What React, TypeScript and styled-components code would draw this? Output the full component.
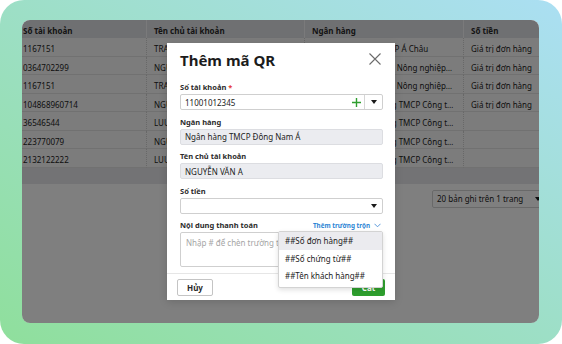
import React from "react";
import styled, {createGlobalStyle} from "styled-components";

const GlobalStyle = createGlobalStyle`
  html, body {
    margin: 0;
    padding: 0;
    background: #ffffff;
  }
  body {
    font-family: "Noto Sans", "Open Sans", sans-serif;
    color: #222;
  }
`;

const rows = [
    {account: "1167151", owner: "TRAN VAN AN", bank: "ACB - Ngân hàng TMCP Á Châu", amount: "Giá trị đơn hàng"},
    {account: "0364702299", owner: "NGUYỄN THỊ HOA", bank: "Agribank - Ngân hàng Nông nghiệp và Phát triển", amount: "Giá trị đơn hàng"},
    {account: "1167151", owner: "TRAN VAN AN", bank: "Agribank - Ngân hàng Nông nghiệp và Phát triển", amount: "Giá trị đơn hàng"},
    {account: "104868960714", owner: "NGUYỄN VĂN BÌNH", bank: "VietinBank-Ngân hàng TMCP Công thương", amount: "Giá trị đơn hàng"},
    {account: "36546544", owner: "LUU VĂN MINH", bank: "VietinBank-Ngân hàng TMCP Công thương", amount: ""},
    {account: "223770079", owner: "NGUYỄN THỊ LAN", bank: "VietinBank-Ngân hàng TMCP Công thương", amount: ""},
    {account: "2132122222", owner: "LUU THỊ HẠNH", bank: "VietinBank-Ngân hàng TMCP Công thương", amount: ""},
];

const mergeFields = ["##Số đơn hàng##", "##Số chứng từ##", "##Tên khách hàng##"];

const Caret = () => (
    <svg width="6" height="4" viewBox="0 0 6 4">
        <path d="M0 0 L6 0 L3 4 Z" fill="#1a1a1a"/>
    </svg>
);

export default function App() {
    return (
        <>
            <GlobalStyle/>
            <Frame>
                <AppWindow>
                    <Table>
                        <HeadCell $first>Số tài khoản</HeadCell>
                        <HeadCell>Tên chủ tài khoản</HeadCell>
                        <HeadCell>Ngân hàng</HeadCell>
                        <HeadCell>Số tiền</HeadCell>
                        {rows.map((r, i) => (
                            <React.Fragment key={i}>
                                <Cell $first>{r.account}</Cell>
                                <Cell>{r.owner}</Cell>
                                <Cell $trim>{r.bank}</Cell>
                                <Cell>{r.amount}</Cell>
                            </React.Fragment>
                        ))}
                    </Table>
                    <ScrollBand/>
                    <Pager>
                        <PageSize>
                            <span>20 bản ghi trên 1 trang</span>
                            <Caret/>
                        </PageSize>
                    </Pager>

                    <Mask/>

                    <Modal>
                        <ModalHeader>
                            <Title>Thêm mã QR</Title>
                            <CloseButton>
                                <svg width="12" height="12" viewBox="0 0 12 12">
                                    <path d="M0.5 0.5 L11.5 11.5 M11.5 0.5 L0.5 11.5" stroke="#6b6b6b" strokeWidth="1.1"/>
                                </svg>
                            </CloseButton>
                        </ModalHeader>

                        <ModalBody>
                            <Field>
                                <Label>Số tài khoản <Required>*</Required></Label>
                                <InputBox>
                                    <InputText>11001012345</InputText>
                                    <PlusIcon>
                                        <svg width="9" height="9" viewBox="0 0 9 9">
                                            <path d="M4.5 0 V9 M0 4.5 H9" stroke="#2f9e2f" strokeWidth="1.4"/>
                                        </svg>
                                    </PlusIcon>
                                    <Addon><Caret/></Addon>
                                </InputBox>
                            </Field>
                            <Field>
                                <Label>Ngân hàng</Label>
                                <InputBox $disabled>
                                    <InputText>Ngân hàng TMCP Đông Nam Á</InputText>
                                </InputBox>
                            </Field>
                            <Field>
                                <Label>Tên chủ tài khoản</Label>
                                <InputBox $disabled>
                                    <InputText>NGUYỄN VĂN A</InputText>
                                </InputBox>
                            </Field>
                            <Field>
                                <Label>Số tiền</Label>
                                <InputBox>
                                    <InputText/>
                                    <SelectCaret><Caret/></SelectCaret>
                                </InputBox>
                            </Field>
                            <Field>
                                <LabelRow>
                                    <Label>Nội dung thanh toán</Label>
                                    <MergeLink>
                                        Thêm trường trộn
                                        <svg width="7" height="5" viewBox="0 0 7 5">
                                            <path d="M0.5 0.8 L3.5 3.8 L6.5 0.8" fill="none" stroke="#4a8fd6" strokeWidth="0.9"/>
                                        </svg>
                                    </MergeLink>
                                </LabelRow>
                                <TextArea>Nhập # để chèn trường thông tin</TextArea>
                            </Field>
                        </ModalBody>

                        <ModalFooter>
                            <CancelButton>Hủy</CancelButton>
                            <SaveButton>Cất</SaveButton>
                        </ModalFooter>

                        <MergeMenu>
                            {mergeFields.map((f, i) => (
                                <MenuItem key={f} $active={i === 0}>{f}</MenuItem>
                            ))}
                        </MergeMenu>
                    </Modal>
                </AppWindow>
            </Frame>
        </>
    );
}

const Frame = styled.div`
  width: 562px;
  height: 344px;
  box-sizing: border-box;
  padding: 20px 23px 21px 22px;
  border-radius: 24px;
  background: linear-gradient(to top right, #8fdf9c 0%, #9ddfc6 50%, #abdff3 100%);
`;

const AppWindow = styled.div`
  position: relative;
  height: 100%;
  border-radius: 8px;
  overflow: hidden;
  background: #ffffff;
  font-size: 8px;
`;

const Table = styled.div`
  display: grid;
  grid-template-columns: 124px 158px 159px 140px;
  grid-template-rows: 18px;
  grid-auto-rows: 18.5px;
`;

const HeadCell = styled.div<{ $first?: boolean }>`
  display: flex;
  align-items: center;
  box-sizing: border-box;
  padding: 3px 0 0 ${p => p.$first ? "1px" : "7px"};
  background: #dfe0e5;
  font-weight: 700;
  color: #2a2a2a;
  border-left: ${p => p.$first ? "none" : "1px solid #f4f4f6"};
  white-space: nowrap;
  overflow: hidden;
`;

const Cell = styled.div<{ $first?: boolean; $trim?: boolean }>`
  display: block;
  box-sizing: border-box;
  padding: 0 ${p => p.$trim ? "9px" : "6px"} 0 ${p => p.$first ? "1px" : "7px"};
  line-height: 21px;
  background: #f9f9f9;
  border-bottom: 1px solid #e2e2e2;
  border-left: ${p => p.$first ? "none" : "1px dotted #d0d0d0"};
  color: #222;
  white-space: nowrap;
  overflow: hidden;
  text-overflow: ellipsis;
`;

const ScrollBand = styled.div`
  height: 16px;
  background: #e6e6ea;
`;

const Pager = styled.div`
  display: flex;
  padding: 6px 0 0 410px;
`;

const PageSize = styled.div`
  display: flex;
  align-items: center;
  justify-content: space-between;
  flex-shrink: 0;
  box-sizing: border-box;
  width: 114px;
  height: 18px;
  padding: 0 4px 0 4px;
  border: 1px solid #d2d2d2;
  border-radius: 2px;
  background: #fff;
  font-size: 8px;
  color: #222;
`;

const Mask = styled.div`
  position: absolute;
  inset: 0;
  background: rgba(0, 0, 0, 0.5);
`;

const Modal = styled.div`
  position: absolute;
  left: 145px;
  top: 23px;
  width: 228px;
  height: 257px;
  display: flex;
  flex-direction: column;
  background: #ffffff;
  box-shadow: 0 2px 8px rgba(0, 0, 0, 0.15);
`;

const ModalHeader = styled.div`
  display: flex;
  align-items: center;
  justify-content: space-between;
  padding: 6px 13px 0 13px;
  height: 22px;
`;

const Title = styled.div`
  font-size: 15px;
  line-height: 22px;
  font-weight: 700;
  color: #1c1c1c;
`;

const CloseButton = styled.div`
  display: flex;
  align-items: center;
  margin-right: 1px;
  margin-top: -2px;
`;

const ModalBody = styled.div`
  display: flex;
  flex-direction: column;
  gap: 6.5px;
  padding: 11px 12px 6px 13px;
  flex: 1;
`;

const Field = styled.div`
  display: flex;
  flex-direction: column;
  gap: 2px;
`;

const Label = styled.div`
  font-size: 7.5px;
  line-height: 10px;
  font-weight: 700;
  color: #2b2b2b;
`;

const Required = styled.span`
  color: #e53935;
`;

const LabelRow = styled.div`
  display: flex;
  justify-content: space-between;
  align-items: center;
`;

const MergeLink = styled.div`
  display: flex;
  align-items: center;
  gap: 4px;
  font-size: 6.3px;
  font-weight: 700;
  color: #2b84d4;
  margin-right: 2px;
`;

const InputBox = styled.div<{ $disabled?: boolean }>`
  display: flex;
  align-items: center;
  box-sizing: border-box;
  height: 16px;
  border: 1px solid ${p => p.$disabled ? "#dcdde1" : "#cfcfcf"};
  border-radius: 2px;
  background: ${p => p.$disabled ? "#ebecf0" : "#ffffff"};
`;

const InputText = styled.div`
  flex: 1;
  padding-left: 4px;
  font-size: 8px;
  color: #222;
  white-space: nowrap;
`;

const PlusIcon = styled.div`
  display: flex;
  align-items: center;
  padding-right: 3px;
`;

const Addon = styled.div`
  display: flex;
  align-items: center;
  justify-content: center;
  width: 17px;
  height: 100%;
  border-left: 1px solid #d6d6d6;
`;

const SelectCaret = styled.div`
  display: flex;
  align-items: center;
  padding-right: 5px;
`;

const TextArea = styled.div`
  box-sizing: border-box;
  height: 35px;
  padding: 4px 5px;
  border: 1px solid #cfcfcf;
  border-radius: 2px;
  font-size: 8px;
  color: #a5a5a5;
  white-space: nowrap;
  overflow: hidden;
`;

const ModalFooter = styled.div`
  display: flex;
  align-items: center;
  justify-content: space-between;
  height: 27px;
  padding: 0 10px;
  border-top: 1px solid #e6e6e6;
`;

const CancelButton = styled.div`
  display: flex;
  align-items: center;
  justify-content: center;
  box-sizing: border-box;
  width: 36px;
  height: 17px;
  border: 1px solid #c4c4c4;
  border-radius: 2px;
  font-size: 8px;
  font-weight: 700;
  color: #2a2a2a;
`;

const SaveButton = styled.div`
  display: flex;
  align-items: center;
  justify-content: center;
  width: 33px;
  height: 17px;
  border-radius: 2px;
  background: #2e9e2e;
  font-size: 8px;
  font-weight: 700;
  color: #ffffff;
`;

const MergeMenu = styled.div`
  position: absolute;
  left: 111px;
  top: 188px;
  width: 105px;
  box-sizing: border-box;
  padding: 0 0 2px 0;
  background: #ffffff;
  border: 1px solid #d3d3d3;
  border-radius: 2px;
  box-shadow: 0 2px 5px rgba(0, 0, 0, 0.12);
`;

const MenuItem = styled.div<{ $active?: boolean }>`
  height: 17.5px;
  line-height: 17.5px;
  padding-left: 6px;
  font-size: 8px;
  color: #222;
  background: ${p => p.$active ? "#ebebef" : "transparent"};
  white-space: nowrap;
`;
